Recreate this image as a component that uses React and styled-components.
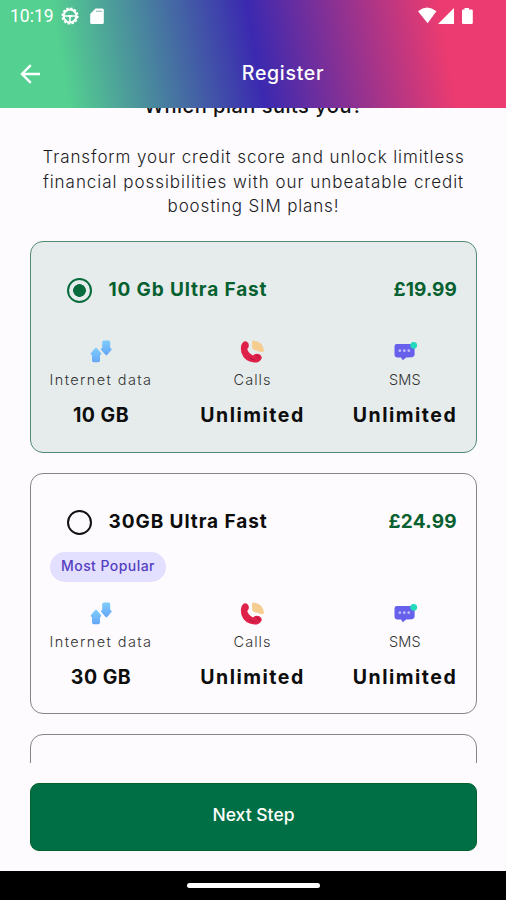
import { useState } from 'react';
import styled, { createGlobalStyle } from 'styled-components';

const plans = [
    { id: 1, name: "10 Gb Ultra Fast", price: "£19.99", data: "10 GB", nameSpacing: 0.87, priceSpacing: 0.1 },
    { id: 2, name: "30GB Ultra Fast", price: "£24.99", data: "30 GB", popular: true, nameSpacing: 0.93, priceSpacing: 0.3 },
];

export default function App() {

    const [selected, setSelected] = useState(1);

    return (
        <Screen>
            <GlobalStyle />
            <Header>
                <StatusBar>
                    <StatusGroup>
                        <Clock>10:19</Clock>
                        <WheelIcon />
                        <CardIcon />
                    </StatusGroup>
                    <SignalIcons />
                </StatusBar>
                <AppBar>
                    <BackButton aria-label="Back">
                        <BackIcon />
                    </BackButton>
                    <PageTitle>Register</PageTitle>
                    <span />
                </AppBar>
            </Header>
            <Content>
                <Heading>Which plan suits you?</Heading>
                <Intro>
                    <IntroLine $spacing={0.91}>Transform your credit score and unlock limitless</IntroLine>
                    <IntroLine $spacing={0.96}>financial possibilities with our unbeatable credit</IntroLine>
                    <IntroLine $spacing={0.85}>boosting SIM plans!</IntroLine>
                </Intro>
                <PlanList>
                    {plans.map((plan) => (
                        <Plan key={plan.id} active={selected === plan.id} onClick={() => setSelected(plan.id)} {...plan} />
                    ))}
                    <Card />
                </PlanList>
            </Content>
            <Footer>
                <NextButton>Next Step</NextButton>
            </Footer>
            <SystemNav>
                <HomeHandle />
            </SystemNav>
        </Screen>
    )
}

function Plan({ name, price, data, popular, nameSpacing, priceSpacing, active, onClick }) {
    return (
        <Card $active={active} onClick={onClick}>
            <CardHeader>
                <Radio $active={active} />
                <PlanName $active={active} $spacing={nameSpacing}>{name}</PlanName>
                <Price $spacing={priceSpacing}>{price}</Price>
            </CardHeader>
            {popular && <Badge>Most Popular</Badge>}
            <Features>
                <Feature>
                    <DataIcon />
                    <Label $spacing={1.4}>Internet data</Label>
                    <Value $spacing={0.5}>{data}</Value>
                </Feature>
                <Feature>
                    <CallIcon />
                    <Label $spacing={1}>Calls</Label>
                    <Value $spacing={1.5}>Unlimited</Value>
                </Feature>
                <Feature>
                    <SmsIcon />
                    <Label $spacing={0.2}>SMS</Label>
                    <Value $spacing={1.5}>Unlimited</Value>
                </Feature>
            </Features>
        </Card>
    )
}

function WheelIcon() {
    return (
        <svg width="18" height="18" viewBox="0 0 18 18" fill="none" stroke="#fff">
            <circle cx="9" cy="9" r="6.4" strokeWidth="2" />
            <circle cx="9" cy="9" r="7.8" strokeWidth="1.6" strokeDasharray="2.4 1.68" />
            <path d="M3 9h12M9 9v6" strokeWidth="1.5" />
            <path d="M7 8.2h4v1.7h-1.2v1h-1.6v-1h-1.2z" fill="#fff" stroke="none" />
        </svg>
    )
}

function CardIcon() {
    return (
        <svg width="14" height="17" viewBox="0 0 14 17">
            <path fill="#fff" d="M5.5 .5H12.3Q13.8 .5 13.8 2V14.5Q13.8 16 12.3 16H1.6Q.2 16 .2 14.5V6Z" />
            <path stroke="#8bb3ad" strokeWidth="1" d="M6 3.2h6" />
        </svg>
    )
}

function SignalIcons() {
    return (
        <svg width="56" height="18" viewBox="0 0 56 18" fill="#fff">
            <path d="M0 4.2Q9 -3 18.4 4.2L9.6 16.2Z" />
            <path d="M20 17L36 1V17Z" />
            <path d="M46.5 1H51V2.6H53.8Q54.8 2.6 54.8 3.8V15.8Q54.8 17 53.6 17H45.2Q44 17 44 15.8V3.8Q44 2.6 45 2.6H46.5Z" />
        </svg>
    )
}

function BackIcon() {
    return (
        <svg width="20" height="20" viewBox="0 0 20 20" fill="none" stroke="#fff" strokeWidth="2.4">
            <path d="M20 10H2M10.8 1.2L2 10L10.8 18.8" />
        </svg>
    )
}

function DataIcon() {
    return (
        <svg width="22" height="23" viewBox="0 0 22 23">
            <defs>
                <linearGradient id="arrows" x1="0" y1="0" x2="0" y2="1">
                    <stop offset="0" stopColor="#7fcdfb" />
                    <stop offset="1" stopColor="#65a6f8" />
                </linearGradient>
            </defs>
            <path fill="url(#arrows)" d="M6 7.8Q6.5 7.8 7 8.3L11.2 13.2Q11.5 14.9 10 15.2V20.6Q10 22.3 8.4 22.3H3.6Q2 22.3 2 20.6V15.2Q.2 14.9 .8 13.2L5 8.3Q5.4 7.8 6 7.8Z" />
            <path fill="url(#arrows)" d="M16.4 15.2Q15.9 15.2 15.4 14.7L11 9.8Q10.6 8.3 12.2 8V2.2Q12.2 .6 13.8 .6H18.6Q20.2 .6 20.2 2.2V8Q22.2 8.3 21.6 9.8L17.4 14.7Q17 15.2 16.4 15.2Z" />
        </svg>
    )
}

function CallIcon() {
    return (
        <svg width="25" height="23" viewBox="0 0 25 23">
            <path fill="#f6cd91" d="M12.6 .4Q23.2 1.1 24.2 11.6Q19.6 12.9 16.8 10.6Q11.2 10.4 12.2 5.4Q11.7 2.2 12.6 .4Z" />
            <path fill="#df2149" d="M4 1.4Q8 .8 8.8 4.9Q9.1 7.6 7.2 8.9Q8.4 12.9 13.2 15.4Q15.8 12.6 19.4 14.3Q22.6 16.1 21.4 19Q19.2 22.8 14.2 22.6Q4.2 21.4 1.4 12.8Q-.4 4.3 4 1.4Z" />
            <path stroke="#b51742" strokeWidth="1.1" fill="none" d="M9.4 17.3Q11.5 19.2 15 20M16.8 15.2L19.6 18.7" />
        </svg>
    )
}

function SmsIcon() {
    return (
        <svg width="25" height="23" viewBox="0 0 25 23">
            <path fill="#6660ea" d="M3.8 4.1H19.2Q21.6 4.1 21.6 6.4V14.5Q21.6 16.8 19.2 17.2L13.2 17.6L9.7 20.2L8 17.4H3.8Q1.5 17.1 1.5 14.8V6.4Q1.5 4.1 3.8 4.1Z" />
            <g fill="#bdbaf9">
                <circle cx="6.8" cy="10.7" r="1.4" />
                <circle cx="11.3" cy="10.7" r="1.4" />
                <circle cx="15.8" cy="10.7" r="1.4" />
            </g>
            <circle cx="20.7" cy="5.3" r="3.4" fill="#22d9bd" />
        </svg>
    )
}

const GlobalStyle = createGlobalStyle`
    * {
        box-sizing: border-box;
    }
    body {
        margin: 0;
        font-family: Inter, "Noto Sans", sans-serif;
    }
`;

const Screen = styled.div`
    display: flex;
    flex-direction: column;
    width: 506px;
    height: 900px;
    overflow: hidden;
    background: #fdfbfe;
`;

const Header = styled.header`
    flex: none;
    height: 108px;
    color: #fff;
    background: linear-gradient(80deg, #54d190 13%, #3b29b0 50.5%, #eb3b70 87%);
`;

const StatusBar = styled.div`
    display: flex;
    justify-content: space-between;
    align-items: center;
    height: 32px;
    padding: 0 32px 0 10px;
`;

const StatusGroup = styled.div`
    display: flex;
    align-items: center;

    svg:nth-of-type(1) {
        margin: 0 11px 0 8px;
    }
`;

const Clock = styled.span`
    width: 43px;
    font-family: Roboto, sans-serif;
    font-size: 17.5px;
    white-space: nowrap;
`;

const AppBar = styled.div`
    display: grid;
    grid-template-columns: 60px 1fr 60px;
    align-items: center;
    height: 84px;
`;

const BackButton = styled.button`
    display: flex;
    padding: 0 0 0 20px;
    border: 0;
    background: none;
    cursor: pointer;
`;

const PageTitle = styled.h1`
    margin: 0;
    padding: 0 0 3px 60px;
    font-size: 19.5px;
    font-weight: 500;
    letter-spacing: 0.7px;
    text-align: center;
`;

const Content = styled.main`
    flex: none;
    height: 655px;
    padding: 0 29px 0 30px;
    overflow: hidden;
`;

/* scrolled partly under the header */
const Heading = styled.h2`
    margin: -14px 0 0;
    font-size: 20px;
    font-weight: 500;
    line-height: 24px;
    letter-spacing: 0.5px;
    color: #111;
    text-align: center;
`;

const Intro = styled.div`
    margin: 27px 0 22px;
    font-size: 17px;
    font-weight: 300;
    line-height: 24.6px;
    color: #1c1b1e;
    text-align: center;
`;

const IntroLine = styled.div`
    letter-spacing: ${props => props.$spacing}px;
    white-space: nowrap;
`;

const PlanList = styled.div`
    display: flex;
    flex-direction: column;
    gap: 20px;
`;

const Card = styled.section`
    min-height: 212px;
    padding: 19px 19px 24px;
    border: 1.4px solid ${props => props.$active ? "#548a72" : "#858486"};
    border-radius: 13px;
    background: ${props => props.$active ? "#e5eceb" : "transparent"};
    cursor: pointer;
`;

const CardHeader = styled.div`
    display: flex;
    align-items: center;
    height: 59px;
    padding-left: 16.5px;
`;

const Radio = styled.span`
    flex: none;
    width: 25px;
    height: 25px;
    margin-right: 17px;
    border: 2px solid ${props => props.$active ? "#086b3e" : "#111"};
    border-radius: 50%;
    background: ${props => props.$active ? "radial-gradient(circle, #086b3e 6px, transparent 6.7px)" : "none"};
`;

const PlanName = styled.h3`
    margin: 0;
    padding-bottom: 2px;
    font-size: 19px;
    font-weight: 700;
    letter-spacing: ${props => props.$spacing}px;
    white-space: nowrap;
    color: ${props => props.$active ? "#07602f" : "#0d0d0d"};
`;

const Price = styled.span`
    margin-left: auto;
    padding-bottom: 2px;
    font-size: 19px;
    font-weight: 700;
    letter-spacing: ${props => props.$spacing}px;
    color: #07602f;
`;

const Badge = styled.div`
    width: 116px;
    height: 30px;
    border-radius: 15px;
    background: #e3dfff;
    font-size: 14px;
    font-weight: 500;
    line-height: 27px;
    letter-spacing: 0.45px;
    color: #5440bf;
    text-align: center;
    white-space: nowrap;
`;

const Features = styled.div`
    display: flex;
    justify-content: space-between;
    margin-top: 20px;
`;

const Feature = styled.div`
    display: flex;
    flex-direction: column;
    align-items: center;
    width: 104px;

    &:first-child {
        width: 102px;
    }
`;

const Label = styled.span`
    margin-top: 7px;
    font-size: 14.5px;
    font-weight: 300;
    line-height: 20px;
    letter-spacing: ${props => props.$spacing}px;
    white-space: nowrap;
    color: #333;
`;

const Value = styled.strong`
    margin-top: 13px;
    font-size: 19.5px;
    font-weight: 700;
    line-height: 24px;
    letter-spacing: ${props => props.$spacing}px;
    white-space: nowrap;
    color: #0d0d0d;
`;

const Footer = styled.footer`
    flex: none;
    height: 108px;
    padding: 20px 29px 0 30px;
`;

const NextButton = styled.button`
    display: block;
    width: 100%;
    height: 68px;
    padding: 0 0 5px;
    border: 1px solid #04612b;
    border-radius: 9px;
    background: #006f45;
    font-family: inherit;
    font-size: 17.5px;
    font-weight: 500;
    color: #fff;
    cursor: pointer;
`;

const SystemNav = styled.div`
    display: flex;
    justify-content: center;
    align-items: center;
    flex: 1;
    background: #000;
`;

const HomeHandle = styled.div`
    width: 133px;
    height: 5px;
    border-radius: 3px;
    background: #fff;
`;
